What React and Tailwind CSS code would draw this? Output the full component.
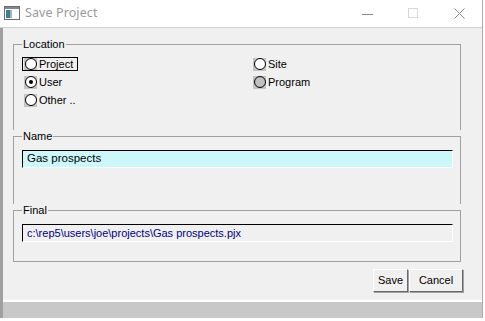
import { useState } from "react";

const Radio = ({ checked, disabled }) => (
  <span className="w-[13px] h-[13px] bg-[#c4c4c4] flex items-center justify-center shrink-0">
    <span
      className={
        "w-[12px] h-[12px] rounded-full border border-black flex items-center justify-center " +
        (disabled ? "bg-[#c0c0c0]" : "bg-white")
      }
    >
      {checked && <span className="w-[4px] h-[4px] rounded-full bg-black" />}
    </span>
  </span>
);

const RadioItem = ({ label, checked, disabled, focused, onClick }) => (
  <div
    onClick={onClick}
    className={
      "h-[14px] flex items-center gap-[2px] pl-[2px] pr-[5px] w-fit " +
      (focused ? "outline outline-1 outline-black -outline-offset-1" : "")
    }
  >
    <Radio checked={checked} disabled={disabled} />
    <span className="text-[11px] leading-[13px] text-black">{label}</span>
  </div>
);

const WinButton = ({ children, className }) => (
  <button
    className={
      "h-[23px] bg-[#f0f0f0] text-[11px] text-black border border-t-white border-l-white border-b-[#696969] border-r-[#696969] shadow-[1px_1px_0_#a0a0a0] " +
      className
    }
  >
    {children}
  </button>
);

export default function App() {
  const [location, setLocation] = useState("user");

  return (
    <div className="w-[485px] h-[321px] bg-white overflow-hidden font-['Liberation_Sans',Arial,sans-serif]">
      <div className="w-[483px] h-[318px] flex flex-col border-r border-[#b8a8a8]">
        {/* title bar */}
        <div className="h-[28px] shrink-0 bg-white border-b border-[#cfcfcf] flex items-center">
          <svg width="16" height="14" viewBox="0 0 16 14" className="ml-[4px] mt-[-1px]">
            <rect x="0.5" y="0.5" width="15" height="13" fill="#fff" stroke="#6b6b6b" />
            <rect x="1" y="1" width="14" height="2" fill="#7a8a96" />
            <rect x="2" y="4" width="4" height="8" fill="#3d7f8c" />
            <rect x="6" y="4" width="2" height="8" fill="#9bb7c0" />
          </svg>
          <span className="ml-[5px] text-[12.5px] text-[#9a9a9a] font-['Noto_Sans',sans-serif] tracking-[0.1px]">
            Save Project
          </span>
          <div className="ml-auto flex items-center h-full">
            <div className="w-[46px] h-full flex items-center justify-center">
              <span className="w-[11px] h-px bg-[#8a8a8a] mt-[1px]" />
            </div>
            <div className="w-[46px] h-full flex items-center justify-center">
              <span className="w-[10px] h-[10px] border border-[#d8d8d8] mt-[-1px]" />
            </div>
            <div className="w-[46px] h-full flex items-center justify-center">
              <svg width="11" height="11" viewBox="0 0 11 11" className="mt-[-1px]">
                <path d="M0.5 0.5L10.5 10.5M10.5 0.5L0.5 10.5" stroke="#8a8a8a" strokeWidth="1" />
              </svg>
            </div>
          </div>
        </div>

        {/* client area */}
        <div className="flex-1 flex flex-col bg-[#f0f0f0] border-l-[3px] border-l-[#a0a0a0]">
          <div className="flex-1 pt-[10px] pl-[10px] pr-[21px]">
            <fieldset className="border-t border-l border-r border-[#a0a0a0] pl-[8px] pb-[23px]">
              <legend className="px-[1px] text-[11px] leading-[13px] text-black">Location</legend>
              <div className="mt-[6px] grid grid-cols-[229px_1fr] gap-y-[4px]">
                <RadioItem label="Project" focused checked={location === "project"} onClick={() => setLocation("project")} />
                <RadioItem label="Site" checked={location === "site"} onClick={() => setLocation("site")} />
                <RadioItem label="User" checked={location === "user"} onClick={() => setLocation("user")} />
                <RadioItem label="Program" disabled checked={false} />
                <RadioItem label="Other .." checked={location === "other"} onClick={() => setLocation("other")} />
              </div>
            </fieldset>

            <fieldset className="border-t border-l border-r border-[#a0a0a0] pl-[8px] pr-[7px] pb-[36px]">
              <legend className="px-[1px] text-[11px] leading-[13px] text-black">Name</legend>
              <div className="mt-[7px] h-[18px] bg-[#ccf8fc] border-t border-l border-black border-b border-r border-b-white border-r-white flex items-center pl-[4px]">
                <span className="text-[11.5px] text-black">Gas prospects</span>
              </div>
            </fieldset>

            <fieldset className="border border-[#a0a0a0] pl-[8px] pr-[7px] pb-[19px]">
              <legend className="px-[1px] text-[11px] leading-[13px] text-black">Final</legend>
              <div className="mt-[7px] h-[18px] bg-[#f0f0f0] border-t border-l border-black border-b border-r border-b-white border-r-white flex items-center pl-[4px]">
                <span className="text-[11px] text-[#000080]">c:\rep5\users\joe\projects\Gas prospects.pjx</span>
              </div>
            </fieldset>

            <div className="mt-[7px] flex justify-end gap-[1px] mr-[-2px]">
              <WinButton className="w-[35px]">Save</WinButton>
              <WinButton className="w-[54px]">Cancel</WinButton>
            </div>
          </div>

          {/* status bar */}
          <div className="h-[18px] shrink-0 border-t-2 border-white bg-[#c8c8c8]" />
        </div>
      </div>
    </div>
  );
}
